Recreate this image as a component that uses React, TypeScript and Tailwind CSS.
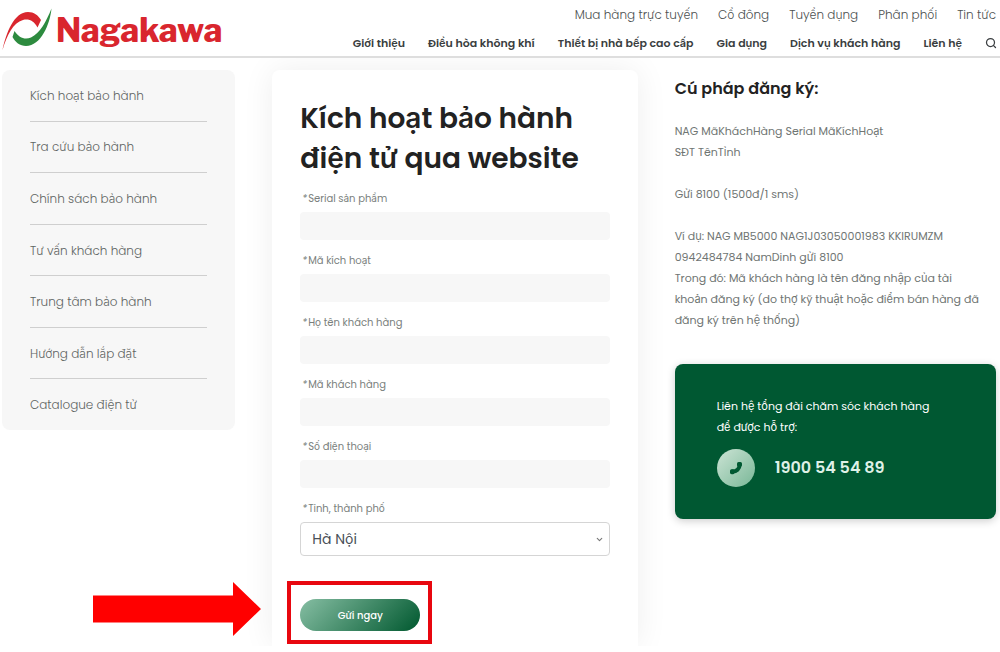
import { ChevronDown, Search } from "lucide-react";

const topLinks = [
  "Mua hàng trực tuyến",
  "Cổ đông",
  "Tuyển dụng",
  "Phân phối",
  "Tin tức",
];

const mainLinks = [
  "Giới thiệu",
  "Điều hòa không khí",
  "Thiết bị nhà bếp cao cấp",
  "Gia dụng",
  "Dịch vụ khách hàng",
  "Liên hệ",
];

const sideLinks = [
  "Kích hoạt bảo hành",
  "Tra cứu bảo hành",
  "Chính sách bảo hành",
  "Tư vấn khách hàng",
  "Trung tâm bảo hành",
  "Hướng dẫn lắp đặt",
  "Catalogue điện tử",
];

const fields = [
  { id: "serial", label: "Serial sản phẩm" },
  { id: "activation", label: "Mã kích hoạt" },
  { id: "name", label: "Họ tên khách hàng" },
  { id: "customer", label: "Mã khách hàng" },
  { id: "phone", label: "Số điện thoại" },
];

function Logo() {
  return (
    <a href="#" className="flex items-center gap-1 pt-1 pl-0.5">
      <svg viewBox="0 0 50 44" className="h-11 w-[50px]" aria-hidden="true">
        <path
          d="M0.500 42C4 25 12 4 26 4C32 4 36 7 39 12L35.500 19.500C32 13 27 10.500 21 12C11 15 5 27 0.500 42Z"
          fill="#d9262e"
        />
        <path
          d="M49.500 0.500C48 16 39 38 24 38C18 38 13 34 10.500 29L12.500 23C17 30 23 32 29 29.500C38 25 44 14 49.500 0.500Z"
          fill="#2d8b3f"
        />
      </svg>
      <span className="font-['Libre_Franklin','Liberation_Sans',sans-serif] text-[33px] leading-10 font-extrabold text-[#d9262e]">
        Nagakawa
      </span>
    </a>
  );
}

function Header() {
  return (
    <header className="relative z-10 flex h-[58px] justify-between border-b-2 border-[#dedede] bg-white">
      <Logo />
      <div className="flex flex-col items-end whitespace-nowrap">
        <nav className="flex h-8 items-center gap-5 pr-1 text-xs font-light text-[#4c5050]">
          {topLinks.map((link) => (
            <a key={link} href="#">
              {link}
            </a>
          ))}
        </nav>
        <nav className="flex h-[26px] items-center gap-[23px] pr-[3px] text-[11px] font-semibold text-[#3a3e40]">
          {mainLinks.map((link) => (
            <a key={link} href="#">
              {link}
            </a>
          ))}
          <button type="button" aria-label="Tìm kiếm">
            <Search size={12} strokeWidth={2.5} />
          </button>
        </nav>
      </div>
    </header>
  );
}

function Sidebar() {
  return (
    <nav className="flex h-[360px] flex-col self-start rounded-lg bg-[#f7f7f7] px-7 text-xs font-light text-[#5f6563]">
      {sideLinks.map((link) => (
        <a
          key={link}
          href="#"
          className="flex flex-1 items-center border-b border-[#cfcfcf] pt-px last:border-b-0"
        >
          {link}
        </a>
      ))}
    </nav>
  );
}

function FieldLabel({ id, text }: { id: string; text: string }) {
  return (
    <label
      htmlFor={id}
      className="flex h-[22px] gap-px pl-0.5 text-[10px] leading-[18px] text-[#7a7f7d]"
    >
      <span className="italic">*</span>
      {text}
    </label>
  );
}

function ActivationForm() {
  return (
    <form className="rounded-t-lg bg-white px-7 pt-[29px] pb-[15px] shadow-[0_0_32px_rgba(0,0,0,0.07)]">
      <h1 className="mb-[11px] text-[28px] leading-10 font-semibold whitespace-nowrap text-[#222]">
        Kích hoạt bảo hành
        <br />
        điện tử qua website
      </h1>
      {fields.map((field) => (
        <div key={field.id} className="mb-3">
          <FieldLabel id={field.id} text={field.label} />
          <input
            id={field.id}
            type="text"
            className="block h-7 w-full rounded bg-[#f7f7f7] px-3 text-sm outline-none"
          />
        </div>
      ))}
      <FieldLabel id="province" text="Tỉnh, thành phố" />
      <div className="relative">
        <select
          id="province"
          className="block h-[34px] w-full appearance-none rounded border border-[#d5d5d5] bg-white px-[11px] text-sm text-[#495057]"
        >
          <option>Hà Nội</option>
        </select>
        <ChevronDown
          size={9}
          strokeWidth={3}
          className="pointer-events-none absolute top-[13px] right-[6px] text-[#777]"
        />
      </div>
      <div className="relative mt-[43px] w-[120px]">
        <div className="pointer-events-none absolute -top-[18px] -right-3 -bottom-[13px] -left-[13px] border-4 border-[#e8070f]" />
        <svg
          viewBox="0 0 168 54"
          className="absolute -top-[17px] right-full mr-[39px] h-[54px] w-[168px]"
          aria-hidden="true"
        >
          <path d="M0 13.500H140V0L168 27L140 54V40.500H0Z" fill="#ff0000" />
        </svg>
        <button
          type="submit"
          className="block h-8 w-full rounded-full bg-linear-[135deg] from-[#86bea3] to-[#00582f] text-[10px] font-medium text-white"
        >
          Gửi ngay
        </button>
      </div>
    </form>
  );
}

function Info() {
  return (
    <section className="self-start">
      <h2 className="pt-[9px] text-base leading-5 font-semibold text-[#222]">
        Cú pháp đăng ký:
      </h2>
      <div className="mt-[22px] space-y-[21px] text-[11px] leading-[21px] whitespace-nowrap text-[#6f7573]">
        <p>
          NAG MãKháchHàng Serial MãKíchHoạt
          <br />
          SĐT TênTỉnh
        </p>
        <p>Gửi 8100 (1500đ/1 sms)</p>
        <p>
          Ví dụ: NAG MB5000 NAG1J03050001983 KKIRUMZM
          <br />
          0942484784 NamDinh gửi 8100
          <br />
          Trong đó: Mã khách hàng là tên đăng nhập của tài
          <br />
          khoản đăng ký (do thợ kỹ thuật hoặc điểm bán hàng đã
          <br />
          đăng ký trên hệ thống)
        </p>
      </div>
      <div className="mt-[33px] rounded-lg bg-[#005832] px-[42px] py-8 text-white shadow-[0_2px_8px_rgba(0,0,0,0.2)]">
        <p className="text-[11px] leading-[21px] whitespace-nowrap">
          Liên hệ tổng đài chăm sóc khách hàng
          <br />
          để được hỗ trợ:
        </p>
        <div className="mt-[11px] flex items-center gap-5">
          <span className="flex size-[38px] items-center justify-center rounded-full bg-linear-[135deg] from-[#cce4d5] to-[#79b797]">
            <svg viewBox="0 0 14 14" className="size-[14px]" aria-hidden="true">
              <path
                d="M3.300 10.600C7.500 10.800 10.500 8 10.700 3.600"
                fill="none"
                stroke="#005832"
                strokeWidth="4"
                strokeLinecap="round"
              />
              <rect x="8" y="1" width="5" height="4.600" rx="1.600" fill="#005832" />
              <rect x="1" y="8.200" width="4.600" height="5" rx="1.600" fill="#005832" />
            </svg>
          </span>
          <a
            href="tel:1900545489"
            className="text-base leading-5 font-semibold text-[#dff1e7]"
          >
            1900 54 54 89
          </a>
        </div>
      </div>
    </section>
  );
}

export default function App() {
  return (
    <div className="min-h-screen bg-white font-['Poppins','Inter',sans-serif]">
      <Header />
      <main className="grid grid-cols-[233fr_365fr_321fr] gap-x-[37px] overflow-hidden pt-3 pr-1 pl-0.5">
        <Sidebar />
        <ActivationForm />
        <Info />
      </main>
    </div>
  );
}
